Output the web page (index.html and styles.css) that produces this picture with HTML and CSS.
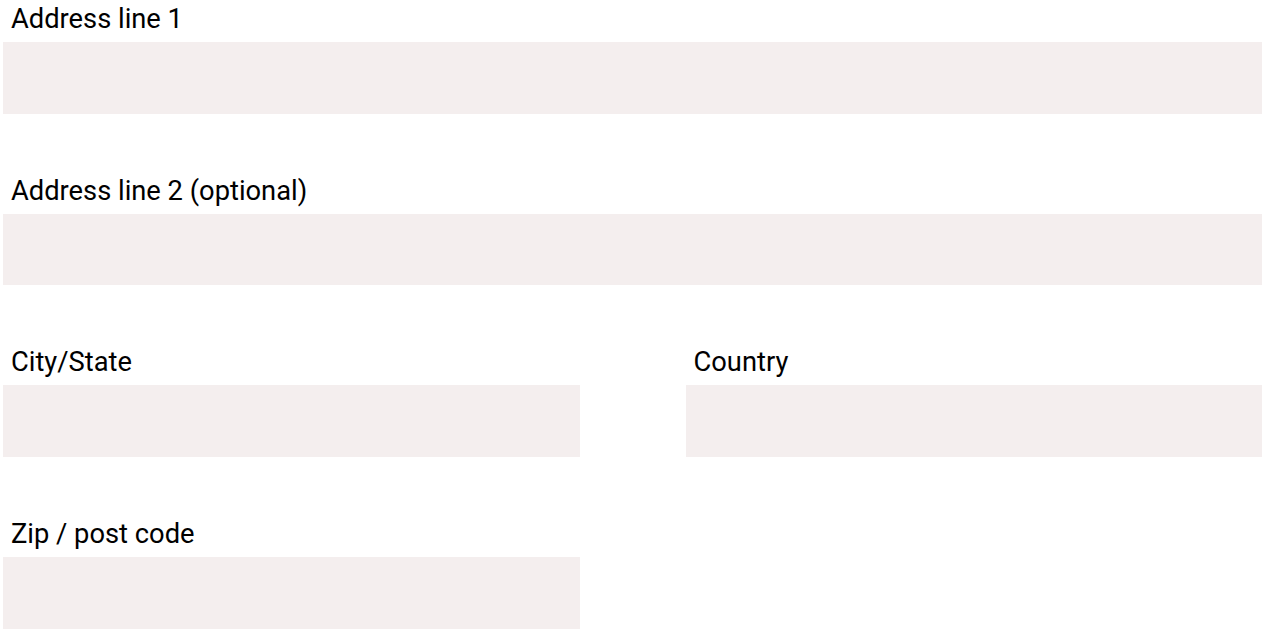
FILE: index.html
```html
<!DOCTYPE html>
<html lang="en">
<head>
<meta charset="utf-8">
<title>Address form</title>
<link rel="stylesheet" href="styles.css">
</head>
<body>
<form class="form">
  <div class="field">
    <label class="label" for="a1">Address line 1</label>
    <input class="input" id="a1" type="text">
  </div>
  <div class="field">
    <label class="label" for="a2">Address line 2 (optional)</label>
    <input class="input" id="a2" type="text">
  </div>
  <div class="row">
    <div class="field">
      <label class="label" for="city">City/State</label>
      <input class="input" id="city" type="text">
    </div>
    <div class="field">
      <label class="label" for="country">Country</label>
      <input class="input" id="country" type="text">
    </div>
  </div>
  <div class="row">
    <div class="field">
      <label class="label" for="zip">Zip / post code</label>
      <input class="input" id="zip" type="text">
    </div>
  </div>
</form>
</body>
</html>
```
FILE: styles.css
```css
html, body {
  margin: 0;
  padding: 0;
  background: #ffffff;
}
body {
  font-family: Roboto, "Liberation Sans", sans-serif;
  color: #000000;
}
.form {
  width: 1259px;
  padding: 3px 0 0 3px;
  display: flex;
  flex-direction: column;
  gap: 61.2px;
}
.row {
  display: grid;
  grid-template-columns: 1fr 1fr;
  column-gap: 106px;
}
.field {
  display: flex;
  flex-direction: column;
}
.label {
  font-size: 27.3px;
  line-height: 32px;
  padding-left: 8px;
  margin-bottom: 7px;
}
.input {
  box-sizing: border-box;
  height: 71.5px;
  width: 100%;
  margin: 0;
  border: none;
  background: #f4eeee;
  font: inherit;
  padding: 0 8px;
  outline: none;
}
```
